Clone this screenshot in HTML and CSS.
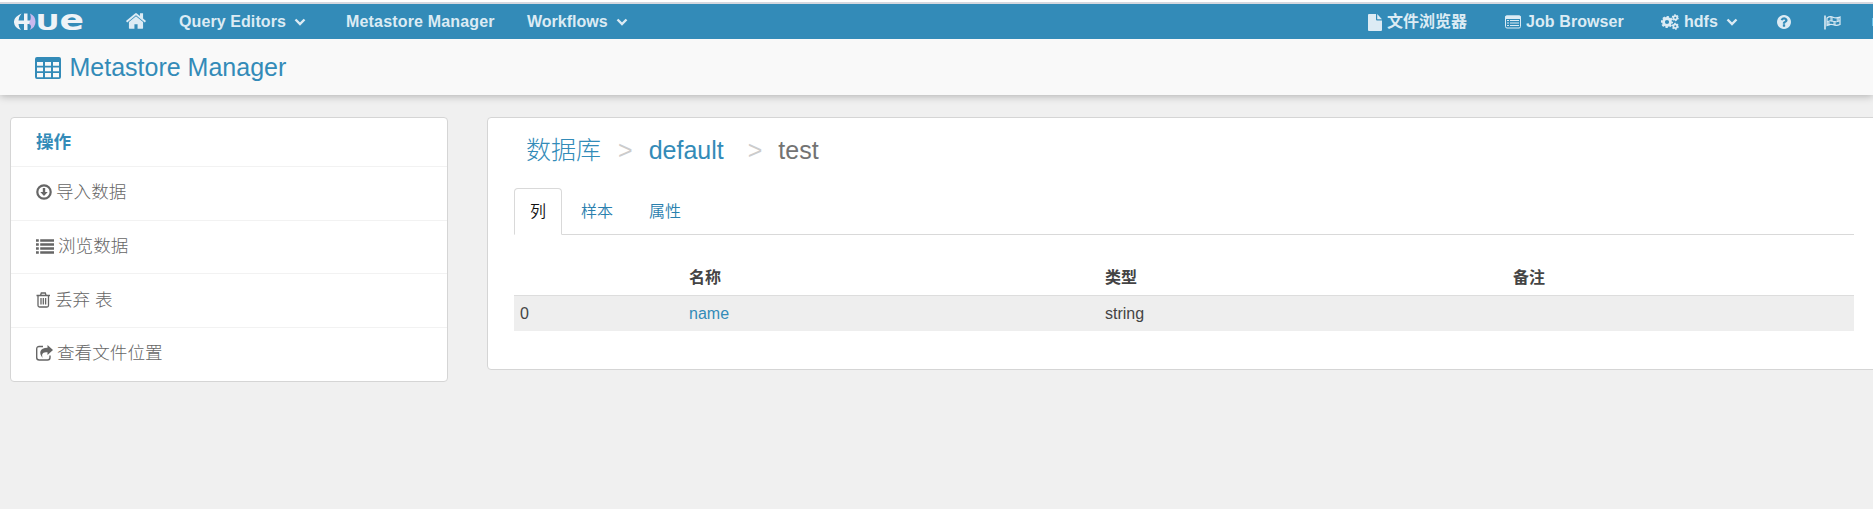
FILE: index.html
```html
<!DOCTYPE html>
<html lang="zh-CN">
<head>
<meta charset="utf-8">
<title>Metastore Manager</title>
<link rel="stylesheet" href="styles.css">
</head>
<body>
<nav class="navbar">
  <a class="brand"><svg width="72" height="24" viewBox="0 -2 72 24"><path d="M7.500 1.500Q-.5 5 0 10.500T7 18Q4.500 15.500 4.500 12H10v6h3.500V1.500H10V8.500H4.500Q4.500 5 7.500 1.500z" fill="#eef3f7"/><path d="M13 8.500h3V12h-3z" fill="#eef3f7"/><path d="M16 1.500q5.500 2.500 5.500 8.300T15.500 18q2-2 1.500-4-.5-1.500-2-2l1-3.500q1.500-2.500 0-7z" fill="#c9b8ee"/><text class="wordmark" x="21.500" y="17.700" font-size="22" textLength="24" lengthAdjust="spacingAndGlyphs">U</text><text class="wordmark" x="45.500" y="17.700" font-size="27.500" textLength="24.500" lengthAdjust="spacingAndGlyphs">e</text></svg></a>
  <a><svg class="home" width="22" height="22" viewBox="0 0 1792 1792" fill="currentColor"><path d="M1472 992v480q0 26-19 45t-45 19h-384v-384h-256v384h-384q-26 0-45-19t-19-45v-480q0-1 .5-3t.5-3l575-474 575 474q1 2 1 6zm223-69l-62 74q-8 9-21 11h-3q-13 0-21-7l-692-577-692 577q-12 8-24 7-13-2-21-11l-62-74q-8-10-7-23.500t11-21.500l719-599q32-26 76-26t76 26l244 204v-195q0-14 9-23t23-9h192q14 0 23 9t9 23v408l219 182q10 8 11 21.500t-7 23.500z"/></svg></a>
  <a><span class="fit-query">Query Editors</span><svg class="caret" width="12" height="8" viewBox="0 0 12 8"><path d="M1.500 1.500L6 6l4.500-4.500"/></svg></a>
  <a class="fit-meta">Metastore Manager</a>
  <a>Workflows<svg class="caret" width="12" height="8" viewBox="0 0 12 8"><path d="M1.500 1.500L6 6l4.500-4.500"/></svg></a>
  <a><svg class="file" width="14" height="17" viewBox="0 0 14 17" fill="currentColor"><path d="M1 0h7v5.500q0 1 1 1h5V16q0 1-1 1H1q-1 0-1-1V1q0-1 1-1zM9.200 0L14 5.200H9.200z"/></svg>文件浏览器</a>
  <a><svg class="job" width="16" height="14" viewBox="0 0 16 14"><rect x=".5" y="1" width="15" height="12" rx="1.500" fill="none" stroke="currentColor"/><path d="M2 5.500h2M5 5.500h9M2 8h2M5 8h9M2 10.500h2M5 10.500h9" stroke="currentColor" fill="none" stroke-width="1.200"/><path d="M0 2q0-1.500 1.500-1.500h13Q16 .5 16 2v2H0z" fill="currentColor"/></svg><span class="fit-job">Job Browser</span></a>
  <a><svg class="gears" width="18" height="16" viewBox="0 0 18 16" fill="none" stroke="currentColor"><circle cx="6" cy="8" r="3.500" stroke-width="2.800"/><circle cx="6" cy="8" r="5.200" stroke-width="1.800" stroke-dasharray="2.300 1.784" stroke-dashoffset="1"/><circle cx="14.300" cy="3.700" r="1.900" stroke-width="1.700"/><circle cx="14.300" cy="3.700" r="2.900" stroke-width="1.200" stroke-dasharray="1.600 1.437"/><circle cx="14.300" cy="12.300" r="1.900" stroke-width="1.700"/><circle cx="14.300" cy="12.300" r="2.900" stroke-width="1.200" stroke-dasharray="1.600 1.437"/></svg>hdfs<svg class="caret" width="12" height="8" viewBox="0 0 12 8"><path d="M1.500 1.500L6 6l4.500-4.500"/></svg></a>
  <a><svg width="14" height="14" viewBox="128 128 1536 1536" fill="currentColor"><path d="M1024 1376v-192q0-14-9-23t-23-9h-192q-14 0-23 9t-9 23v192q0 14 9 23t23 9h192q14 0 23-9t9-23zm256-672q0-88-55.500-163t-138.500-116-170-41q-243 0-371 213-15 24 8 42l132 100q7 6 19 6 16 0 25-12 53-68 86-92 34-24 86-24 48 0 85.500 26t37.500 59q0 38-20 61t-68 45q-63 28-115.500 86.500t-52.500 125.500v36q0 14 9 23t23 9h192q14 0 23-9t9-23q0-19 21.500-49.500t54.500-49.500q32-18 49-28.500t46-35 44.500-48 28-60.500 12.500-81zm384 192q0 209-103 385.500t-279.500 279.500-385.500 103-385.500-103-279.500-279.500-103-385.500 103-385.500 279.500-279.500 385.500-103 385.500 103 279.500 279.500 103 385.500z"/></svg></a>
  <a><svg width="17" height="15" viewBox="0 0 17 15" fill="none" stroke="currentColor"><path d="M1 .5v14" stroke-width="1.600"/><path d="M3 3Q6 .8 9 2.200T16 2v7.500Q12.500 11 9.500 9.800T3 10.500z" stroke-width="1.200"/><path d="M3 6.800Q6 5 9 6.300T16 5.800" stroke-width="1"/><path d="M4.500 6.500v4M7.500 2v4.200M10.500 6.500v3.800M13.800 2.500v3.700" stroke-width="2.400" opacity=".7"/></svg></a>
  <a class="cutoff"></a>
</nav>
<header class="subnav">
  <svg width="26" height="22" viewBox="0 0 26 22"><path fill-rule="evenodd" fill="currentColor" d="M2 0h22q2 0 2 2v18q0 2-2 2H2q-2 0-2-2V2q0-2 2-2zM2 5v3.700h6V5zm8 0v3.700h6V5zm8 0v3.700h6V5zM2 10.500V14.200h6v-3.700zm8 0V14.200h6v-3.700zm8 0V14.200h6v-3.700zM2 16v4.200h6v-4.200zm8 0v4.200h6v-4.200zm8 0v4.200h6v-4.200z"/></svg>
  <span>Metastore Manager</span>
</header>
<main class="layout">
  <aside class="card sidebar">
    <div class="side-title">操作</div>
    <a class="side-item"><svg width="16" height="16" viewBox="0 0 16 16"><circle cx="8" cy="8" r="6.700" fill="none" stroke="currentColor" stroke-width="2.200"/><path d="M6.800 4h2.400v4h2.500L8 12 4.300 8h2.500z" fill="currentColor"/></svg>导入数据</a>
    <a class="side-item"><svg width="18" height="15" viewBox="0 0 18 15" fill="none" stroke="currentColor" stroke-width="2.700"><path d="M0 1.500h2.800M4.200 1.500H18M0 5.500h2.800M4.200 5.500H18M0 9.500h2.800M4.200 9.500H18M0 13.500h2.800M4.200 13.500H18"/></svg>浏览数据</a>
    <a class="side-item"><svg width="15" height="16" viewBox="0 0 15 16" fill="none" stroke="currentColor" stroke-width="1.300"><path d="M.5 3.500h13.500M4.500 3.500l.8-2.500h4l.8 2.500M2 3.500v10q0 1.500 1.500 1.500H11q1.500 0 1.500-1.500v-10M5 6v6.500M7.300 6v6.500M9.600 6v6.500"/></svg>丢弃 表</a>
    <a class="side-item"><svg width="17" height="16" viewBox="0 0 17 16"><path d="M7 1.500H3.200Q.7 1.500.7 4v8.500q0 2.500 2.500 2.500h8.300q2.500 0 2.500-2.500v-2" fill="none" stroke="currentColor" stroke-width="1.400"/><path d="M11.500 0L17 5l-5.500 5V7.300C7 7.300 5 8.500 6.800 13 2.500 8.500 3.500 2.700 11.500 2.700z" fill="currentColor"/></svg>查看文件位置</a>
  </aside>
  <section class="card content">
    <h1 class="crumbs"><a>数据库</a><i class="sep first">&gt;</i><a>default</a><i class="sep second">&gt;</i><span>test</span></h1>
    <div class="tabs"><a class="tab active">列</a><a class="tab">样本</a><a class="tab">属性</a></div>
    <table class="columns">
      <colgroup><col class="c-index"><col class="c-name"><col class="c-type"><col></colgroup>
      <thead><tr><th></th><th>名称</th><th>类型</th><th>备注</th></tr></thead>
      <tbody><tr><td>0</td><td><a>name</a></td><td>string</td><td></td></tr></tbody>
    </table>
  </section>
</main>
</body>
</html>
```
FILE: styles.css
```css
* { box-sizing: border-box; }
body {
  margin: 0;
  height: 509px;
  overflow: hidden;
  background: #f0f0f0;
  color: #444;
  font: 16px/20px "Liberation Sans", "Noto Sans CJK SC", sans-serif;
}
svg { flex: none; }
a { color: #338bb8; }
.navbar {
  position: relative;
  z-index: 1;
  height: 39px;
  border-top: 2px solid #fff;
  box-shadow: inset 0 2px #d6d8df;
  padding-top: 2px;
  background: #338bb8;
  display: grid;
  grid-template-columns: 125px 54px 167px 181px 841px 137px 156px 116px 47px 48px 1px;
}
.navbar a {
  display: flex;
  align-items: center;
  padding-top: 1px;
  color: #dcebf4;
  font-weight: bold;
  white-space: nowrap;
}
.navbar .brand { padding: 0 0 0 14px; }
.wordmark { fill: #eef3f7; font-family: "DejaVu Sans", sans-serif; font-weight: bold; }
.home { margin: -3px 0 0 0; }
.fit-query, .fit-job { letter-spacing: .09px; }
.navbar .fit-meta { letter-spacing: .17px; }
.caret { margin: 0 0 0 8px; fill: none; stroke: currentColor; stroke-width: 2.400; }
.file { margin: 0 5px 0 0; }
.job { margin-right: 5px; }
.gears { margin: 0 5px 0 0; }
.navbar .cutoff { height: 8px; align-self: center; background: #65c0e8; }
.subnav {
  height: 56px;
  padding: 2px 0 0 35px;
  display: flex;
  align-items: center;
  gap: 8.500px;
  background: #f9f9f9;
  color: #338bb8;
  box-shadow: 0 1px 8px rgba(0, 0, 0, .28);
  font-size: 25px;
}
.subnav span { margin-top: -3px; }
.layout {
  padding: 22px 0 0 10px;
  display: flex;
  gap: 39px;
  align-items: flex-start;
}
.card { background: #fff; border: 1px solid #d5d5d5; border-radius: 4px; }
.sidebar { width: 438px; flex: none; height: 265px; font-size: 17.600px; }
.side-title { height: 48px; padding-left: 25px; line-height: 48px; font-weight: bold; color: #338bb8; }
.side-item {
  height: 53.700px;
  border-top: 1px solid #f2f2f2;
  padding: 0 0 2px 25px;
  display: flex;
  align-items: center;
  gap: 4px;
  color: #666;
  font-weight: 300;
}
.content { width: 1400px; flex: none; height: 253px; padding: 15px 0 0 26px; }
.crumbs { margin: 0 0 0 12px; height: 34px; display: flex; align-items: center; font-size: 25px; font-weight: 300; color: #737373; line-height: 34px; }
.sep { color: #ccc; font-style: normal; }
.first { margin: 0 16px 0 17px; }
.second { margin: 0 16px 0 24px; }
.tabs { width: 1340px; height: 47px; margin-top: 21px; display: flex; gap: 2px; border-bottom: 1px solid #d9d9d9; }
.tab { height: 46px; padding: 0 17px; line-height: 47px; font-weight: 350; color: #2a80ae; }
.tab.active { height: 47px; padding: 0 15px; border: 1px solid #d9d9d9; border-bottom-color: #fff; border-radius: 4px 4px 0 0; line-height: 45px; color: #111; }
.columns { width: 1340px; margin-top: 20px; table-layout: fixed; border-collapse: separate; border-spacing: 0; }
.c-index { width: 169px; }
.c-name { width: 416px; }
.c-type { width: 408px; }
.columns th { height: 40px; padding: 6px 0 0 6px; text-align: left; }
.columns td { height: 36px; padding: 0 6px; border-top: 1px solid #ddd; background: #eee; }
```
